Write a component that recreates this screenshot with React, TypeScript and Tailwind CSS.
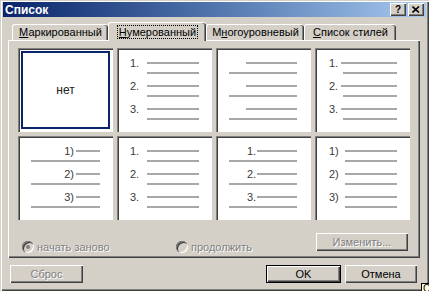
import React from "react";

const raised =
  "shadow-[inset_1px_1px_0_#ffffff,inset_-1px_-1px_0_#404040,inset_-2px_-2px_0_#808080]";
const etched = "text-[#808080] [text-shadow:1px_1px_0_#ffffff]";

type Preview = {
  nums?: string[];
  rowA: string;
  num?: string;
  lineA: string;
  lineB: string;
};

const previews: Preview[] = [
  { nums: ["1.", "2.", "3."], rowA: "pl-[13px]", num: "w-[17px]", lineA: "w-[52px]", lineB: "ml-[30px] w-[52px]" },
  { rowA: "pl-[30px]", lineA: "w-[51px]", lineB: "ml-[13px] w-[68px]" },
  { nums: ["1.", "2.", "3."], rowA: "pl-[14px]", num: "w-[12px]", lineA: "w-[56px]", lineB: "ml-[28px] w-[54px]" },
  { nums: ["1)", "2)", "3)"], rowA: "pl-[40px]", num: "w-[18px] text-right pr-[2px]", lineA: "w-[24px]", lineB: "ml-[13px] w-[69px]" },
  { nums: ["1.", "2.", "3."], rowA: "pl-[13px]", num: "w-[17px]", lineA: "w-[52px]", lineB: "ml-[30px] w-[52px]" },
  { nums: ["1.", "2.", "3."], rowA: "pl-[31px]", num: "w-[10px]", lineA: "w-[40px]", lineB: "ml-[13px] w-[68px]" },
  { nums: ["1)", "2)", "3)"], rowA: "pl-[14px]", num: "w-[16px]", lineA: "w-[52px]", lineB: "ml-[30px] w-[52px]" },
];

const Cell = ({ children }: { children: React.ReactNode }) => (
  <div className="h-[84px] bg-white shadow-[inset_1px_1px_0_#808080,inset_2px_2px_0_#404040]">
    {children}
  </div>
);

const PreviewCell = ({ p }: { p: Preview }) => (
  <Cell>
    <div className="flex flex-col gap-[6px] pt-[9px]">
      {[0, 1, 2].map((i) => (
        <div key={i} className="flex flex-col">
          <div className={`flex h-[12px] items-center ${p.rowA}`}>
            {p.nums && (
              <span className={`text-[11px] leading-[12px] text-[#3a3a3a] ${p.num}`}>{p.nums[i]}</span>
            )}
            <div className={`h-[2px] bg-[#a8a8a8] ${p.lineA}`} />
          </div>
          <div className={`mt-[3px] h-[2px] bg-[#a8a8a8] ${p.lineB}`} />
        </div>
      ))}
    </div>
  </Cell>
);

const Radio = ({ checked }: { checked?: boolean }) => (
  <div className="flex h-[12px] w-[12px] items-center justify-center rounded-full bg-[#d4d0c8] shadow-[inset_1px_1px_0_#808080,inset_2px_2px_0_#404040,inset_-1px_-1px_0_#ffffff]">
    {checked && <div className="h-[4px] w-[4px] rounded-full bg-[#808080]" />}
  </div>
);

const Tab = ({ w, children }: { w: string; children: React.ReactNode }) => (
  <div
    className={`mb-px flex h-[16px] items-center justify-center rounded-t-[3px] border-l border-t border-white shadow-[inset_-1px_0_0_#404040,inset_-2px_0_0_#808080] ${w}`}
  >
    {children}
  </div>
);

export default function App() {
  return (
    <div className="relative h-[291px] w-[429px] overflow-hidden bg-[#d4d0c8] pl-[3px] pr-[3px] pt-[2px] font-['Liberation_Sans',Arial,sans-serif] text-[11px] text-black shadow-[inset_1px_1px_0_#d4d0c8,inset_2px_2px_0_#ffffff,inset_-1px_-1px_0_#404040,inset_-2px_-2px_0_#808080]">
      {/* Title bar */}
      <div className="flex h-[15px] items-center justify-between bg-gradient-to-r from-[#0a246a] to-[#a6caf0] pl-[2px] pr-[2px]">
        <span className="text-[12px] font-bold leading-none text-white">Список</span>
        <div className="flex gap-[2px]">
          <div className={`flex h-[13px] w-[16px] items-center justify-center bg-[#d4d0c8] text-[10px] font-bold leading-none ${raised}`}>
            ?
          </div>
          <div className={`flex h-[13px] w-[16px] items-center justify-center bg-[#d4d0c8] ${raised}`}>
            <svg width="8" height="7" viewBox="0 0 8 7">
              <path d="M0.5 0.5 L7 6.5 M7 0.5 L0.5 6.5" stroke="#000" strokeWidth="1.6" />
            </svg>
          </div>
        </div>
      </div>

      <div className="pl-[5px] pr-[6px]">
        {/* Tabs */}
        <div className="relative z-10 -mb-px mt-[5px] flex h-[19px] items-end pl-[4px]">
          <Tab w="w-[96px]">
            <span>
              <span className="underline">М</span>аркированный
            </span>
          </Tab>
          <div className="flex h-[19px] w-[98px] items-center justify-center rounded-t-[3px] border-l border-t border-white bg-[#d4d0c8] shadow-[inset_-1px_0_0_#404040,inset_-2px_0_0_#808080]">
            <span className="border border-dotted border-black px-[1px] leading-[12px]">
              <span className="underline">Н</span>умерованный
            </span>
          </div>
          <Tab w="w-[98px]">
            <span>
              М<span className="underline">н</span>огоуровневый
            </span>
          </Tab>
          <Tab w="w-[92px]">
            <span>
              <span className="underline">С</span>писок стилей
            </span>
          </Tab>
        </div>

        {/* Panel */}
        <div className={`flex h-[218px] flex-col pl-[10px] pt-[8px] ${raised}`}>
          <div className="grid grid-cols-[repeat(4,95px)] gap-[4px]">
            <Cell>
              <div className="h-full p-[3px]">
                <div className="flex h-full items-center justify-center border-2 border-[#0a246a] text-[12px] text-[#222222]">
                  нет
                </div>
              </div>
            </Cell>
            {previews.map((p, i) => (
              <PreviewCell key={i} p={p} />
            ))}
          </div>

          <div className="mt-[13px] flex items-start pr-[12px]">
            <div className="mt-[6px] flex w-[158px] items-center gap-[3px] pl-[4px]">
              <Radio checked />
              <span className={etched}>начать заново</span>
            </div>
            <div className="mt-[6px] flex items-center gap-[3px]">
              <Radio />
              <span className={etched}>продолжить</span>
            </div>
            <div className={`ml-auto flex h-[18px] w-[92px] items-center justify-center bg-[#d4d0c8] ${raised}`}>
              <span className={etched}>Изменить...</span>
            </div>
          </div>
        </div>

        {/* Bottom buttons */}
        <div className="mt-[7px] flex items-center pl-[2px]">
          <div className={`flex h-[18px] w-[73px] items-center justify-center ${raised}`}>
            <span className={etched}>Сброс</span>
          </div>
          <div className="ml-auto flex h-[18px] w-[75px] items-center justify-center border border-black shadow-[inset_1px_1px_0_#ffffff,inset_-1px_-1px_0_#404040,inset_-2px_-2px_0_#808080]">
            OK
          </div>
          <div className={`ml-[4px] mr-[3px] flex h-[18px] w-[72px] items-center justify-center ${raised}`}>
            Отмена
          </div>
        </div>
      </div>

      {/* Cut-off tooltip in the corner */}
      <div className="absolute left-[421px] top-[283px] h-[10px] w-[10px] overflow-hidden border-l border-t border-black bg-[#ffffe1] pl-[1px] text-[10px] leading-[9px]">
        С
      </div>
    </div>
  );
}
